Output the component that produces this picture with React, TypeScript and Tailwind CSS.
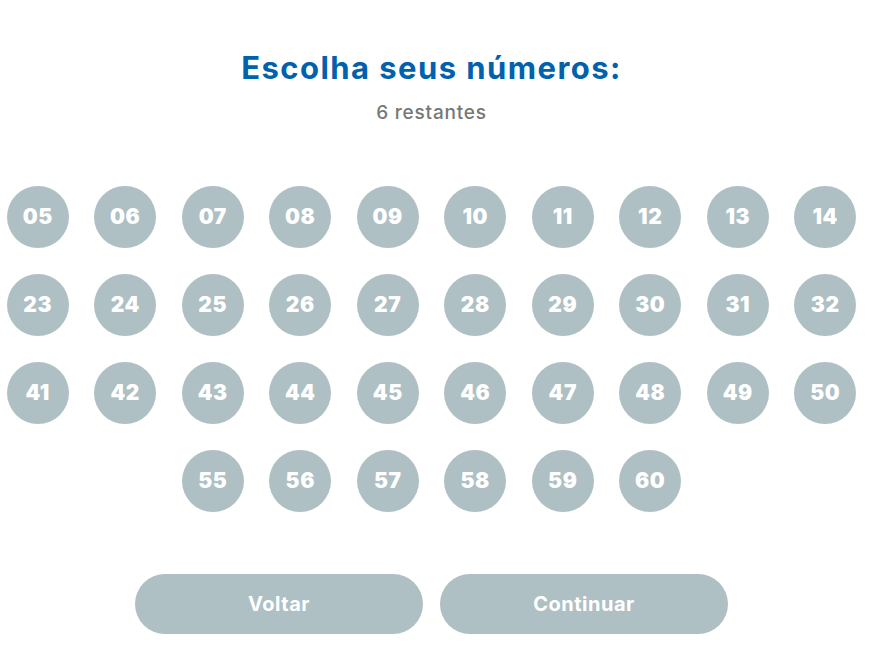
import React from "react";

const rows = [
  ["05","06","07","08","09","10","11","12","13","14"],
  ["23","24","25","26","27","28","29","30","31","32"],
  ["41","42","43","44","45","46","47","48","49","50"],
  ["55","56","57","58","59","60"],
];

export default function App() {
  return (
    <div className="w-[870px] h-[650px] bg-white" style={{ fontFamily: "Inter, 'Noto Sans', sans-serif" }}>
      <div className="w-[863px] flex flex-col items-center pt-[48px]">
        <h1 className="text-[31px] leading-[40px] font-bold text-[#0061ae] tracking-[1.45px]">Escolha seus números:</h1>
        <p className="mt-[13px] text-[19px] leading-[24px] font-medium text-[#777777] tracking-[0.8px]">6 restantes</p>
        <div className="mt-[61px] w-[850px] flex flex-col gap-y-[26px]">
          {rows.map((r, i) => (
            <div key={i} className="flex justify-center gap-x-[25.5px]">
              {r.map((n) => (
                <div key={n} className="w-[62px] h-[62px] rounded-full bg-[#aec0c4] flex items-center justify-center text-white text-[21px] font-black tracking-[0.6px]">
                  {n}
                </div>
              ))}
            </div>
          ))}
        </div>
        <div className="mt-[62px] flex gap-x-[17px]">
          <button className="w-[288px] h-[60px] rounded-full bg-[#aec0c4] text-white text-[20px] font-bold tracking-[0.5px]">Voltar</button>
          <button className="w-[288px] h-[60px] rounded-full bg-[#aec0c4] text-white text-[20px] font-bold tracking-[0.5px]">Continuar</button>
        </div>
      </div>
    </div>
  );
}
